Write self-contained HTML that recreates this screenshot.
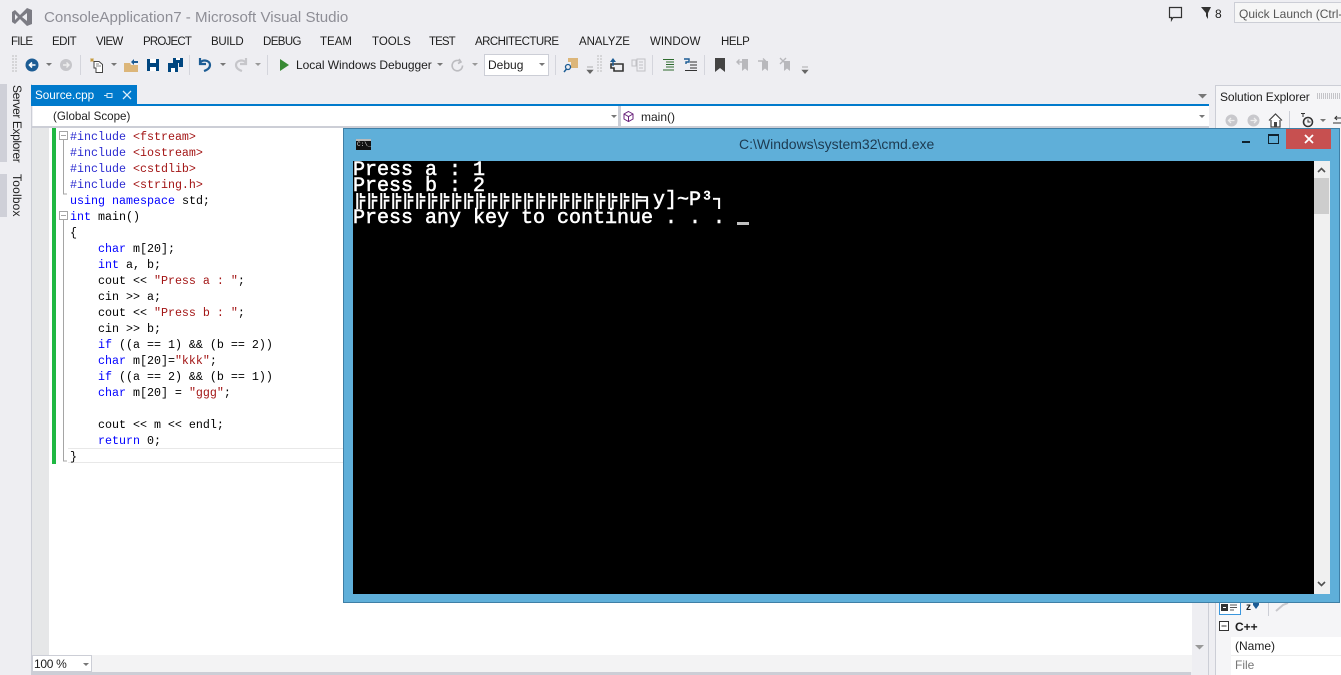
<!DOCTYPE html>
<html><head><meta charset="utf-8"><style>
html,body{margin:0;padding:0;width:1341px;height:675px;overflow:hidden;background:#eeeef2}
body{position:relative;font-family:"Liberation Sans",sans-serif;color:#1e1e1e}
.a{position:absolute}
.t{position:absolute;white-space:nowrap}
.m{font-size:11.5px;top:35px;line-height:14px}
.code{position:absolute;left:70px;font:11.67px/16px "Liberation Mono",monospace;white-space:pre;color:#000}
.k{color:#0000ff}.s{color:#a31515}.p{color:#808080}.i{color:#2b2bd0}
.sep{position:absolute;width:1px;height:20px;top:55px;background:#d4d5dc}
.grip{position:absolute;width:5px;height:18px;top:55px;background:radial-gradient(circle at 1px 1px,#999 .7px,transparent .8px) 0 0/3px 3px}
.con{position:absolute;left:353px;font:20px/16px "Liberation Mono",monospace;color:#fff;white-space:pre;-webkit-text-stroke:.55px #fff}
svg{position:absolute;overflow:visible}
</style></head><body>
<svg style="left:11px;top:7px" width="22" height="20" viewBox="0 0 22 20"><path d="M1 5 L4 3 L9 8 L16 1 L21 3 L21 17 L16 19 L9 12 L4 17 L1 15 Z M4 7 L4 13 L7 10 Z M16 6 L11 10 L16 14 Z" fill="#7c7c84" fill-rule="evenodd"/></svg>
<div class="t" style="left:44px;top:9px;font-size:15.1px;color:#8e8e96;line-height:18px">ConsoleApplication7 - Microsoft Visual Studio</div>
<div class="t m" style="left:11px;letter-spacing:-.75px">FILE</div><div class="t m" style="left:52px;letter-spacing:-.5px">EDIT</div><div class="t m" style="left:96px;letter-spacing:-.7px">VIEW</div><div class="t m" style="left:143px;letter-spacing:-.8px">PROJECT</div><div class="t m" style="left:211px;letter-spacing:-.3px">BUILD</div><div class="t m" style="left:263px;letter-spacing:-.6px">DEBUG</div><div class="t m" style="left:320px">TEAM</div><div class="t m" style="left:372px">TOOLS</div><div class="t m" style="left:429px;letter-spacing:-.9px">TEST</div><div class="t m" style="left:475px;letter-spacing:-.55px">ARCHITECTURE</div><div class="t m" style="left:579px;letter-spacing:-.1px">ANALYZE</div><div class="t m" style="left:650px">WINDOW</div><div class="t m" style="left:721px;letter-spacing:-.4px">HELP</div>

<!-- top right -->
<svg style="left:1168px;top:6px" width="15" height="15"><path d="M1.500 1.500H13.500V11.500H5L3.500 14V11.500H1.500Z" fill="none" stroke="#333" stroke-width="1.200"/></svg>
<svg style="left:1201px;top:7px" width="10" height="12"><path d="M0 0H10L7 6V12L5 9V6Z" fill="#333"/></svg>
<div class="t" style="left:1215px;top:7px;font-size:12px;line-height:14px">8</div>
<div class="a" style="left:1234px;top:2px;width:107px;height:21px;background:#f6f6f6;border:1px solid #ccced6;border-right:0;box-sizing:border-box"></div>
<div class="t" style="left:1239px;top:7px;font-size:12px;line-height:14px;color:#555;width:102px;overflow:hidden">Quick Launch (Ctrl-</div>

<!-- toolbar -->
<div class="grip" style="left:12px"></div>
<svg style="left:25px;top:58px" width="14" height="14"><circle cx="7" cy="7" r="6.500" fill="#1c5c94"/><path d="M10.500 7H4.500M7 4.500 4.500 7 7 9.500" stroke="#fff" stroke-width="1.600" fill="none"/></svg>
<svg style="left:46px;top:63px" width="6" height="4"><path d="M0 0H6L3 3Z" fill="#777"/></svg>
<svg style="left:60px;top:59px" width="12" height="12"><circle cx="6" cy="6" r="6" fill="#c6c6ca"/><path d="M3 6H9M6.500 3.500 9 6 6.500 8.500" stroke="#eee" stroke-width="1.400" fill="none"/></svg>
<div class="sep" style="left:80px"></div>
<svg style="left:90px;top:58px" width="14" height="15"><path d="M4 3.500H9L12.500 6.500V14.500H6V10H4Z" fill="#fff" stroke="#444"/><path d="M6 6H9M6 8H11" stroke="#888"/><path d="M0 2H4M2 0V4M.5 .5 3.500 3.500M3.500 .5 .5 3.500" stroke="#c69a3c" stroke-width=".7"/></svg>
<svg style="left:111px;top:63px" width="6" height="4"><path d="M0 0H6L3 3Z" fill="#777"/></svg>
<svg style="left:124px;top:58px" width="15" height="14"><path d="M0 5H6L7 7H14V14H0Z" fill="#dcb67a"/><path d="M7 4 10 1V3H14V5H10V7Z" fill="#1c5c94"/></svg>
<svg style="left:147px;top:59px" width="13" height="13"><path d="M0 0H12V12H0Z" fill="#00467f"/><path d="M3 0H9V4H3ZM3 8H9V12H3Z" fill="#fff"/></svg>
<svg style="left:168px;top:58px" width="15" height="14"><path d="M5 0H15V9H11V5H5Z" fill="#00467f"/><path d="M0 5H10V14H0Z" fill="#00467f"/><path d="M3 10H7V14H3ZM8 0H12V2H8Z" fill="#fff"/></svg>
<div class="sep" style="left:189px"></div>
<svg style="left:198px;top:57px" width="14" height="15"><path d="M2 1V7H8M2 6C4 2 12 3 12 8 12 11 9 13 6 14" fill="none" stroke="#1c5c94" stroke-width="2.200"/></svg>
<svg style="left:220px;top:63px" width="6" height="4"><path d="M0 0H6L3 3Z" fill="#777"/></svg>
<svg style="left:234px;top:57px" width="14" height="15"><path d="M12 1V7H6M12 6C10 2 2 3 2 8 2 11 5 13 8 14" fill="none" stroke="#c6c6ca" stroke-width="2.200"/></svg>
<svg style="left:255px;top:63px" width="6" height="4"><path d="M0 0H6L3 3Z" fill="#999"/></svg>
<div class="sep" style="left:267px"></div>
<svg style="left:280px;top:59px" width="10" height="12"><path d="M0 0 9 6 0 12Z" fill="#388a34"/></svg>
<div class="t" style="left:296px;top:58px;font-size:12px;line-height:14px;letter-spacing:-.05px">Local Windows Debugger</div>
<svg style="left:437px;top:63px" width="6" height="4"><path d="M0 0H6L3 3Z" fill="#777"/></svg>
<svg style="left:451px;top:59px" width="13" height="13"><path d="M9.500 2.500A5.200 5.200 0 1 0 11.500 6.500M8 0 10 3 7 4.500" fill="none" stroke="#bcbcc0" stroke-width="1.600"/></svg>
<svg style="left:472px;top:63px" width="6" height="4"><path d="M0 0H6L3 3Z" fill="#999"/></svg>
<div class="a" style="left:484px;top:54px;width:65px;height:22px;background:#fff;border:1px solid #ccced6;box-sizing:border-box"></div>
<div class="t" style="left:488px;top:58px;font-size:12px;line-height:14px">Debug</div>
<svg style="left:539px;top:63px" width="6" height="4"><path d="M0 0H6L3 3Z" fill="#777"/></svg>
<div class="sep" style="left:555px"></div>
<svg style="left:564px;top:58px" width="15" height="15"><path d="M4 0H14V10H7V4H4Z" fill="#dcb67a"/><circle cx="4" cy="9" r="2.500" fill="none" stroke="#1c5c94" stroke-width="1.300"/><path d="M2.500 11 0 14" stroke="#1c5c94" stroke-width="1.500"/></svg>
<svg style="left:586px;top:67px" width="8" height="8"><path d="M1 0H7M1 3H7L4 6.500Z" fill="#666" stroke="#666" stroke-width=".6"/></svg>
<div class="grip" style="left:597px"></div>
<svg style="left:610px;top:58px" width="14" height="14"><path d="M1 6H13V13H4V10H1Z" fill="none" stroke="#333" stroke-width="1.600"/><path d="M3 0 6 4H0Z" fill="#1c5c94"/><path d="M3 3V8" stroke="#1c5c94" stroke-width="1.400"/></svg>
<svg style="left:631px;top:58px" width="15" height="14"><path d="M1 2H5V8H1ZM6 1H14V13H6Z" fill="none" stroke="#c0c0c4"/><path d="M8 4H12M8 7H12M8 10H12" stroke="#c0c0c4"/></svg>
<div class="sep" style="left:652px"></div>
<svg style="left:663px;top:59px" width="12" height="12"><path d="M0 .5H11M3 3H11M3 5.500H11M3 8H11M0 11H11" stroke="#2e6b2e"/></svg>
<svg style="left:684px;top:58px" width="13" height="13"><path d="M0 1H5V4H2V6" fill="none" stroke="#1c5c94" stroke-width="1.400"/><path d="M6 4H13M6 7H13M6 10H13M1 12.500H13" stroke="#333"/></svg>
<div class="sep" style="left:704px"></div>
<svg style="left:715px;top:58px" width="10" height="14"><path d="M0 0H10V14L5 10 0 14Z" fill="#444"/></svg>
<svg style="left:737px;top:58px" width="12" height="13"><path d="M5 1H11V13L8 10.500 5 13Z" fill="#b8b8bc"/><path d="M5 4H0M2.500 1.500 0 4 2.500 6.500" stroke="#b8b8bc" stroke-width="1.400" fill="none"/></svg>
<svg style="left:758px;top:58px" width="12" height="13"><path d="M4 3H10V13L7 10.500 4 13Z" fill="#b8b8bc"/><path d="M0 3H7M5 .5 7.500 3 5 5.500" stroke="#b8b8bc" stroke-width="1.400" fill="none"/></svg>
<svg style="left:780px;top:58px" width="12" height="13"><path d="M4 3H10V13L7 10.500 4 13Z" fill="#b8b8bc"/><path d="M0 0 6 6M6 0 0 6" stroke="#b8b8bc" stroke-width="1.400"/></svg>
<svg style="left:801px;top:67px" width="8" height="8"><path d="M1 0H7M1 3H7L4 6.500Z" fill="#666" stroke="#666" stroke-width=".6"/></svg>

<!-- left rail -->
<div class="a" style="left:0;top:84px;width:7px;height:78px;background:#cfd0d8"></div>
<div class="a" style="left:0;top:174px;width:7px;height:43px;background:#cfd0d8"></div>
<div class="t" style="left:10px;top:85px;font-size:12px;line-height:14px;writing-mode:vertical-rl;letter-spacing:-.4px">Server Explorer</div>
<div class="t" style="left:10px;top:174px;font-size:12px;line-height:14px;writing-mode:vertical-rl;letter-spacing:.2px">Toolbox</div>

<!-- document -->
<div class="a" style="left:31px;top:84px;width:1160px;height:591px;border-left:1px solid #ccced6;box-sizing:border-box"></div>
<div class="a" style="left:31px;top:85px;width:106px;height:20px;background:#007acc"></div>
<div class="t" style="left:35px;top:89px;font-size:11.7px;line-height:14px;color:#fff">Source.cpp</div>
<svg style="left:104px;top:91px" width="9" height="9"><path d="M0 4.500H3M3 2V7M3 2.500H8V6.500H3" fill="none" stroke="#d0e8f8"/></svg>
<svg style="left:122px;top:90px" width="10" height="10"><path d="M1 1 9 9M9 1 1 9" stroke="#dceefa" stroke-width="1.300"/></svg>
<div class="a" style="left:31px;top:104px;width:1178px;height:2px;background:#007acc"></div>
<div class="a" style="left:33px;top:106px;width:1176px;height:20px;background:#fff"></div>
<div class="a" style="left:618px;top:106px;width:3px;height:20px;background:#ccced6"></div>
<div class="a" style="left:31px;top:126px;width:1178px;height:2px;background:#ccced6"></div>
<div class="t" style="left:53px;top:110px;font-size:11.6px;line-height:14px">(Global Scope)</div>
<svg style="left:611px;top:115px" width="6" height="4"><path d="M0 0H6L3 3Z" fill="#777"/></svg>
<svg style="left:623px;top:111px" width="11" height="11"><path d="M5.500 .5 10 3V8L5.500 10.500 1 8V3ZM1 3 5.500 5.500 10 3M5.500 5.500V10.500" fill="none" stroke="#68217a"/></svg>
<div class="t" style="left:641px;top:110px;font-size:12px;line-height:14px">main()</div>
<svg style="left:1199px;top:115px" width="6" height="4"><path d="M0 0H6L3 3Z" fill="#777"/></svg>
<svg style="left:1198px;top:94px" width="9" height="5"><path d="M0 0H9L4.500 4.500Z" fill="#777"/></svg>

<div class="a" style="left:32px;top:128px;width:17px;height:527px;background:#e6e7e8"></div>
<div class="a" style="left:49px;top:128px;width:1143px;height:527px;background:#fff"></div>
<div class="a" style="left:52px;top:128px;width:4px;height:336px;background:#1fb842"></div>
<div class="a" style="left:56px;top:128px;width:293px;height:336px;background:#fff"></div>
<div class="a" style="left:68px;top:448px;width:280px;height:15px;border:1px solid #e8e8e8;border-width:1px 0;box-sizing:border-box"></div>
<svg style="left:59px;top:128px" width="10" height="336"><path d="M.5 3.500H8.500V11.500H.5ZM2 7.500H7M4.500 12V66H8M.5 83.500H8.500V91.500H.5ZM2 87.500H7M4.500 92V333H8" fill="none" stroke="#a5a5a5"/></svg>
<div class="code" style="top:129px"><span class="i">#include</span> <span class="s">&lt;fstream&gt;</span>
<span class="i">#include</span> <span class="s">&lt;iostream&gt;</span>
<span class="i">#include</span> <span class="s">&lt;cstdlib&gt;</span>
<span class="i">#include</span> <span class="s">&lt;string.h&gt;</span>
<span class="k">using</span> <span class="k">namespace</span> std;
<span class="k">int</span> main()
{
    <span class="k">char</span> m[20];
    <span class="k">int</span> a, b;
    cout &lt;&lt; <span class="s">"Press a : "</span>;
    cin &gt;&gt; a;
    cout &lt;&lt; <span class="s">"Press b : "</span>;
    cin &gt;&gt; b;
    <span class="k">if</span> ((a == 1) &amp;&amp; (b == 2))
    <span class="k">char</span> m[20]=<span class="s">"kkk"</span>;
    <span class="k">if</span> ((a == 2) &amp;&amp; (b == 1))
    <span class="k">char</span> m[20] = <span class="s">"ggg"</span>;

    cout &lt;&lt; m &lt;&lt; endl;
    <span class="k">return</span> 0;
}</div>

<div class="a" style="left:32px;top:655px;width:1160px;height:17px;background:#f3f3f4"></div>
<div class="a" style="left:32px;top:655px;width:60px;height:17px;background:#fff;border:1px solid #ccced6;box-sizing:border-box"></div>
<div class="t" style="left:34px;top:657px;font-size:12px;line-height:14px;letter-spacing:-.3px">100 %</div>
<svg style="left:83px;top:663px" width="6" height="4"><path d="M0 0H6L3 3Z" fill="#777"/></svg>
<div class="a" style="left:31px;top:672px;width:1160px;height:3px;background:#ccced6"></div>
<div class="a" style="left:1192px;top:128px;width:17px;height:544px;background:#eeeef2"></div>
<svg style="left:1195px;top:645px" width="9" height="5"><path d="M0 0H9L4.500 4.500Z" fill="#999"/></svg>
<div class="a" style="left:1208px;top:603px;width:1px;height:72px;background:#ccced6"></div>

<!-- solution explorer -->
<div class="a" style="left:1215px;top:85px;width:126px;height:590px;background:#f5f5f7;border-left:1px solid #ccced6;border-top:1px solid #ccced6;box-sizing:border-box"></div>
<div class="t" style="left:1220px;top:90px;font-size:12px;line-height:14px;letter-spacing:-.1px">Solution Explorer</div>
<div class="a" style="left:1317px;top:93px;width:24px;height:6px;background:repeating-linear-gradient(90deg,#c4c4c8 0 1px,transparent 1px 2px)"></div>
<svg style="left:1225px;top:114px" width="13" height="13"><circle cx="6.500" cy="6.500" r="6" fill="#c8c8cc"/><path d="M9.500 6.500H4M6 4 3.500 6.500 6 9" stroke="#eee" fill="none" stroke-width="1.300"/></svg>
<svg style="left:1247px;top:114px" width="13" height="13"><circle cx="6.500" cy="6.500" r="6" fill="#c8c8cc"/><path d="M3.500 6.500H9M7 4 9.500 6.500 7 9" stroke="#eee" fill="none" stroke-width="1.300"/></svg>
<svg style="left:1268px;top:113px" width="15" height="15"><path d="M1 7.500 7.500 1 14 7.500M3 7V14H12V7" fill="#fff" stroke="#444" stroke-width="1.200"/><path d="M6 9H9V14H6Z" fill="#444"/></svg>
<div class="a" style="left:1289px;top:111px;width:1px;height:17px;background:#ccced6"></div>
<svg style="left:1300px;top:113px" width="15" height="15"><path d="M1 .5H5M3 0V4" stroke="#333"/><circle cx="8" cy="9" r="4.500" fill="none" stroke="#333" stroke-width="1.600"/><path d="M8 6.500V9H10.500" stroke="#333" fill="none"/></svg>
<svg style="left:1320px;top:119px" width="6" height="4"><path d="M0 0H6L3 3Z" fill="#777"/></svg>
<svg style="left:1333px;top:115px" width="8" height="12"><path d="M8 3H2L4 1M2 3 4 5M0 8H8" stroke="#333" fill="none"/></svg>

<!-- properties bottom -->
<div class="a" style="left:1219px;top:601px;width:22px;height:14px;background:#fff;border:1px solid #3a96dd;box-sizing:border-box"></div>
<svg style="left:1221px;top:604px" width="18" height="8"><path d="M0 0H7V7H0Z" fill="#333"/><path d="M2 3.500H5" stroke="#fff"/><path d="M9 1H16M9 3.500H16M9 6H13" stroke="#555"/></svg>
<div class="t" style="left:1246px;top:601px;font-size:10px;font-weight:bold;line-height:14px">z</div>
<svg style="left:1253px;top:602px" width="6" height="7"><path d="M0 0H6V3L3 7 0 3Z" fill="#1c5c94"/></svg>
<div class="a" style="left:1268px;top:601px;width:1px;height:15px;background:#ccced6"></div>
<svg style="left:1275px;top:602px" width="14" height="10"><path d="M1 9 8 3 13 1" stroke="#c8c8cc" stroke-width="2" fill="none"/></svg>
<svg style="left:1219px;top:621px" width="11" height="11"><path d="M.5 .5H9.500V9.500H.5ZM2.500 5H7.500" fill="#fff" stroke="#333"/></svg>
<div class="t" style="left:1235px;top:620px;font-size:12px;font-weight:bold;line-height:14px">C++</div>
<div class="a" style="left:1231px;top:637px;width:110px;height:38px;background:#fff"></div>
<div class="a" style="left:1231px;top:655px;width:110px;height:1px;background:#eee"></div>
<div class="t" style="left:1235px;top:639px;font-size:12px;line-height:14px">(Name)</div>
<div class="t" style="left:1235px;top:658px;font-size:12px;line-height:14px;color:#777">File</div>

<!-- cmd window -->
<div class="a" style="left:343px;top:128px;width:997px;height:475px;background:#5fafd9;border:1px solid #3f7fa6;box-sizing:border-box"></div>
<div class="a" style="left:353px;top:161px;width:977px;height:433px;background:#000"></div>
<div class="a" style="left:1314px;top:161px;width:16px;height:433px;background:#f0f0f0"></div>
<div class="a" style="left:1314px;top:178px;width:15px;height:36px;background:#cdcdcd"></div>
<svg style="left:1317px;top:167px" width="9" height="6"><path d="M1 5 4.500 1.500 8 5" fill="none" stroke="#505050" stroke-width="1.600"/></svg>
<svg style="left:1317px;top:581px" width="9" height="6"><path d="M1 1 4.500 4.500 8 1" fill="none" stroke="#505050" stroke-width="1.600"/></svg>
<div class="a" style="left:356px;top:139px;width:15px;height:11px;background:#111;border-top:2px solid #bbb;box-sizing:border-box"></div>
<div class="t" style="left:357px;top:141px;font:6px/8px 'Liberation Mono',monospace;color:#ddd">C:\_</div>
<div class="t" style="left:739px;top:136px;font-size:14px;line-height:17px;color:#1d3a50">C:\Windows\system32\cmd.exe</div>
<div class="a" style="left:1242px;top:141px;width:8px;height:2px;background:#10222e"></div>
<div class="a" style="left:1268px;top:134px;width:11px;height:10px;border:1px solid #10222e;border-top-width:2px;box-sizing:border-box"></div>
<div class="a" style="left:1286px;top:129px;width:45px;height:20px;background:#c75050"></div>
<svg style="left:1304px;top:134px" width="10" height="10"><path d="M1 1 9 9M9 1 1 9" stroke="#fff" stroke-width="1.800"/></svg>
<div class="con" style="top:163px">Press a : 1
Press b : 2</div>
<div class="con" style="top:193px;height:16px;width:300px;overflow:hidden">╠╠╠╠╠╠╠╠╠╠╠╠╠╠╠╠╠╠╠╠╠╠╠╠╕</div>
<div class="con" style="top:193px;left:653px">y]~P³</div>
<div class="con" style="top:193px;left:713px;height:16px;width:12px;overflow:hidden">┐</div>
<div class="con" style="top:211px">Press any key to continue . . . </div>
<div class="a" style="left:737px;top:222px;width:12px;height:3px;background:#c0c0c0"></div>
</body></html>
